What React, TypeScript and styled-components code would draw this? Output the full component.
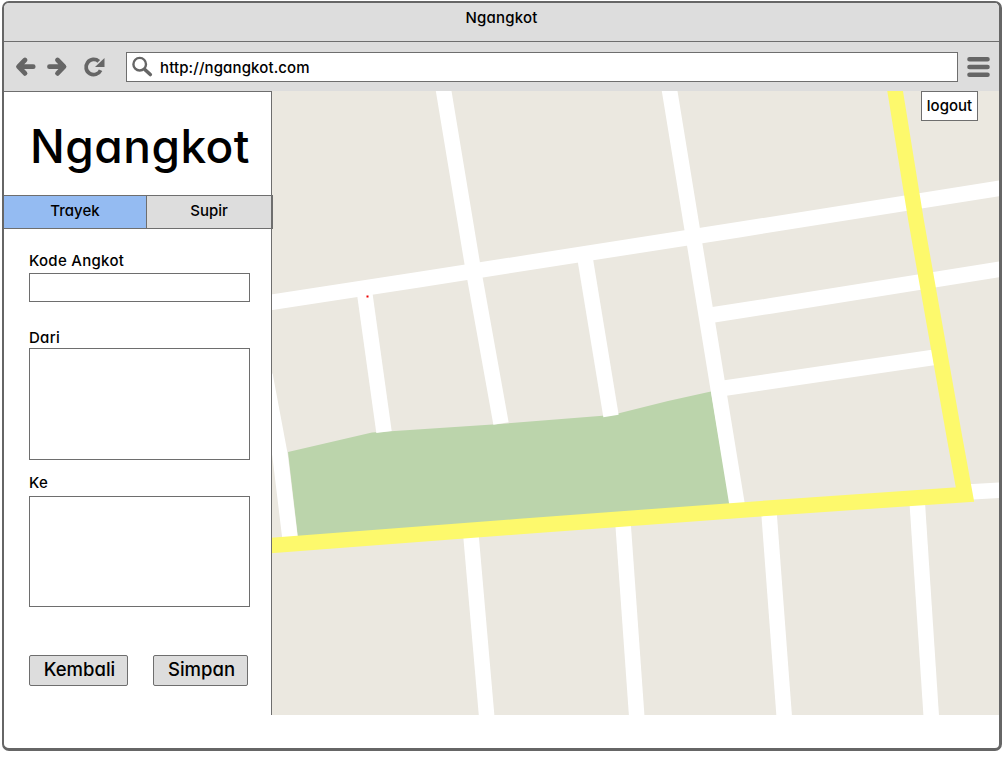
import React from 'react';
import styled, { createGlobalStyle } from 'styled-components';

const GlobalStyle = createGlobalStyle`
  * { box-sizing: border-box; }
  body {
    margin: 0;
    background: #fff;
    color: #000;
    font-family: Inter, "Liberation Sans", sans-serif;
    font-feature-settings: "cv11" 1;
    font-size: 16px;
  }
  button, input, textarea { font: inherit; color: inherit; font-feature-settings: inherit; }
`;

const line = '#6e6e6e';
const grey = '#dddddd';

const Window = styled.div`
  width: 1000px;
  height: 750px;
  margin: 1px 0 0 2px;
  border: solid #666;
  border-width: 2px 3px 3px 2px;
  border-radius: 7px;
  background: #fff;
  display: flex;
  flex-direction: column;
  overflow: hidden;
`;

const TitleBar = styled.header`
  height: 39px;
  padding-top: 5px;
  text-align: center;
  line-height: 20px;
  font-weight: 500;
  font-size: 15px;
  letter-spacing: 0.2px;
  background: ${grey};
  border-bottom: 1px solid ${line};
`;

const NavBar = styled.nav`
  height: 49px;
  display: flex;
  align-items: center;
  background: ${grey};
  padding: 1px 8px 0 11px;
`;

const NavIcons = styled.div`
  display: flex;
  width: 111px;
  svg { display: block; }
`;

const AddressBar = styled.div`
  width: 832px;
  height: 30px;
  display: flex;
  align-items: center;
  gap: 7px;
  padding-left: 5px;
  background: #fff;
  border: 1px solid ${line};
  margin-right: 9px;
`;

const Address = styled.span`
  padding-top: 2px;
  font-size: 15px;
  font-weight: 500;
  line-height: 20px;
  letter-spacing: 0.12px;
`;

const Content = styled.main`
  display: flex;
  height: 624px;
`;

const Sidebar = styled.aside`
  position: relative;
  z-index: 1;
  width: 267px;
  flex: none;
  border-top: 1px solid ${line};
`;

const Brand = styled.h1`
  margin: 0;
  height: 103px;
  padding: 24px 0 0 26px;
  font-size: 46px;
  line-height: 60px;
  font-weight: 500;
  letter-spacing: 0.5px;
  white-space: nowrap;
`;

const Tabs = styled.div`
  display: flex;
  width: 270px;
  height: 34px;
  margin-left: -1px;
  border: 1px solid ${line};
  border-right-width: 2px;
`;

const Tab = styled.button<{ $active?: boolean; $width: number }>`
  width: ${p => p.$width}px;
  padding: 0 0 4px;
  border: 0;
  border-right: ${p => (p.$active ? `1px solid ${line}` : '0')};
  background: ${p => (p.$active ? '#94bbf2' : grey)};
  font-size: 15px;
  font-weight: 500;
`;

const Form = styled.form`
  display: flex;
  flex-direction: column;
  padding: 22px 0 0 25px;
`;

const Label = styled.label<{ $height: number }>`
  height: ${p => p.$height}px;
  line-height: 20px;
  font-size: 15px;
  font-weight: 500;
  letter-spacing: 0.28px;
`;

const Field = styled.textarea<{ $height: number; $after: number }>`
  display: block;
  width: 221px;
  height: ${p => p.$height}px;
  margin: 0 0 ${p => p.$after}px;
  border: 1px solid ${line};
  background: #fff;
  resize: none;
  outline: 0;
  overflow: hidden;
`;

const Actions = styled.div`
  display: flex;
  gap: 25px;
`;

const Action = styled.button<{ $width: number }>`
  width: ${p => p.$width}px;
  height: 31px;
  padding: 0 0 3px 2px;
  border: 1px solid ${line};
  border-radius: 2px;
  background: ${grey};
  font-size: 18.5px;
  font-weight: 500;
`;

const MapPane = styled.section`
  position: relative;
  width: 728px;
  flex: none;
  > svg { display: block; }
`;

const Logout = styled.button`
  position: absolute;
  top: 0;
  right: 21px;
  width: 57px;
  height: 30px;
  padding: 0 0 2px;
  border: 1px solid ${line};
  background: #fff;
  font-size: 15px;
  font-weight: 500;
`;

const streets = [
  '260,304 420,279.5 740,229.5 1005,187.5',
  '442,81 472.5,265 501,423.5',
  '668,81 691.5,225 737,504',
  '364.5,292 384,432',
  '585,258 611,416',
  '712,315 770,306 1005,268.5',
  '722,388.5 933,357.5',
  '265,375 280,455 290,538',
  '960,492.5 1005,490',
  '471,536 487,720',
  '623,523 637,720',
  '769,513 784.5,720',
  '917,499 931.5,720',
];

const CityMap = () => (
  <svg width="728" height="624" viewBox="271 91 728 624">
    <rect x="271" y="91" width="728" height="624" fill="#ebe8e0" />
    <polygon points="288,452 372,432.5 500,424 612,415 668,401 711,391.5 730,504 298,538" fill="#bbd4ab" />
    <g fill="none" stroke="#fff" strokeWidth="15.5">
      {streets.map(points => <polyline key={points} points={points} />)}
    </g>
    <polyline points="260,546.3 520,526.5 770,508 965,494.5 955,440 916,220 893.5,81" fill="none" stroke="#fdf96c" strokeWidth="15.5" />
    <path d="M271.5 91V715" stroke={line} />
    <rect x="366.5" y="295.5" width="2" height="2" fill="#e00" />
  </svg>
);

const ArrowLeft = () => (
  <svg width="32" height="22" viewBox="0 0 32 22" fill="none" stroke="#666" strokeWidth="4.8" strokeLinecap="round" strokeLinejoin="round">
    <path d="M10 4 3.500 10.700 10 17.400M4 10.700h14.200" />
  </svg>
);

const ArrowRight = () => (
  <svg width="36" height="22" viewBox="0 0 36 22" fill="none" stroke="#666" strokeWidth="4.8" strokeLinecap="round" strokeLinejoin="round">
    <path d="M10.500 4 17 10.700l-6.500 6.700M2.500 10.700h14" />
  </svg>
);

const Reload = () => (
  <svg width="24" height="22" viewBox="0 0 24 22">
    <path d="M17.600 14.200A7.600 7.600 0 1 1 15.800 5.400" fill="none" stroke="#666" strokeWidth="3.800" />
    <path d="M21.500 2v9h-9.500z" fill="#666" />
  </svg>
);

const Search = () => (
  <svg width="21" height="22" viewBox="0 0 21 22" fill="none" stroke="#666">
    <circle cx="7.700" cy="8.200" r="6.300" strokeWidth="2.400" />
    <path d="M12.800 13.500 18.300 18.500" strokeWidth="3.600" strokeLinecap="round" />
  </svg>
);

const Menu = () => (
  <svg width="23" height="22" viewBox="0 0 23 22" stroke="#666" strokeWidth="4.600" strokeLinecap="round">
    <path d="M2.500 3.300h18M2.500 11h18M2.500 18.700h18" />
  </svg>
);

export default function App() {
  return (
    <>
      <GlobalStyle />
      <Window>
        <TitleBar>Ngangkot</TitleBar>
        <NavBar>
          <NavIcons><ArrowLeft /><ArrowRight /><Reload /></NavIcons>
          <AddressBar><Search /><Address>http://ngangkot.com</Address></AddressBar>
          <Menu />
        </NavBar>
        <Content>
          <Sidebar>
            <Brand>Ngangkot</Brand>
            <Tabs>
              <Tab type="button" $active $width={143}>Trayek</Tab>
              <Tab type="button" $width={124}>Supir</Tab>
            </Tabs>
            <Form>
              <Label htmlFor="kode" $height={22}>Kode Angkot</Label>
              <Field id="kode" $height={29} $after={26} />
              <Label htmlFor="dari" $height={20}>Dari</Label>
              <Field id="dari" $height={112} $after={13} />
              <Label htmlFor="ke" $height={23}>Ke</Label>
              <Field id="ke" $height={111} $after={48} />
              <Actions>
                <Action type="button" $width={99}>Kembali</Action>
                <Action type="button" $width={95}>Simpan</Action>
              </Actions>
            </Form>
          </Sidebar>
          <MapPane>
            <CityMap />
            <Logout type="button">logout</Logout>
          </MapPane>
        </Content>
      </Window>
    </>
  );
}
